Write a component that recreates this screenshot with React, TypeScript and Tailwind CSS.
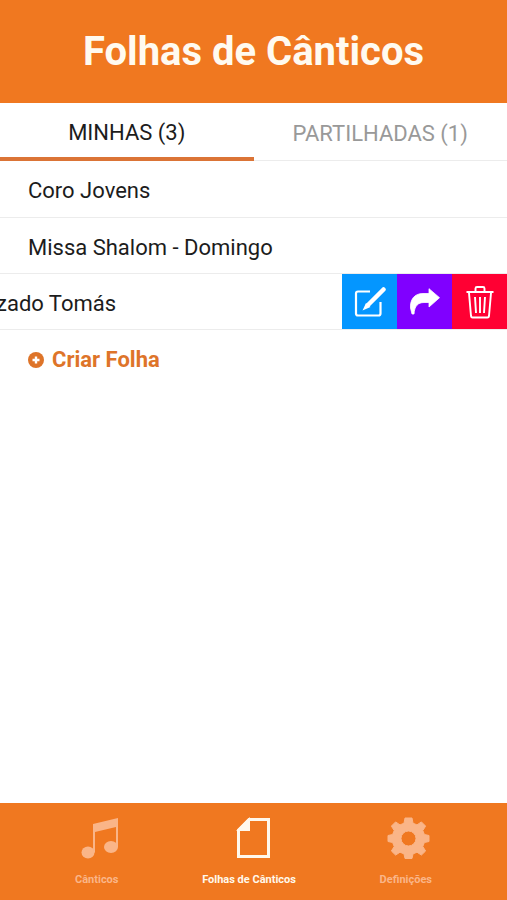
import type { ReactNode } from "react";

const PencilIcon = () => (
  <svg viewBox="1 0 32 32" className="w-8 h-8" fill="none" stroke="currentColor" strokeWidth="2.200" aria-hidden="true">
    <path d="M17 5.500H5Q3 5.500 3 7.500V27.500Q3 29.500 5 29.500H25.500Q27.500 29.500 27.500 27.500V16" />
    <path d="M30.500 3.500L15 19" strokeWidth="4.500" strokeLinecap="round" />
    <path d="M13 17L17.500 21L9.500 24.500Z" fill="currentColor" stroke="none" />
  </svg>
);

const ShareIcon = () => (
  <svg viewBox="0 0 32 32" className="w-8 h-8" fill="currentColor" aria-hidden="true">
    <path
      d="M30.500 11.700L20 2.700V7.500H14C5 7.500 1 14 1.500 22L3 28H5C5.500 20 9 16.500 15 16.500H20V21Z"
      stroke="currentColor"
      strokeWidth="0.800"
      strokeLinejoin="round"
    />
  </svg>
);

const TrashIcon = () => (
  <svg viewBox="0 0 32 36" className="w-8 h-9" fill="none" stroke="currentColor" strokeWidth="1.900" aria-hidden="true">
    <path d="M2.500 8H29.500M11.500 8V4.500Q11.500 3 13 3H19Q20.500 3 20.500 4.500V8" />
    <path d="M5 9L7 32Q7.200 33.500 8.500 33.500H23.500Q24.800 33.500 25 32L27 9" />
    <path d="M11 13L12 29M16 13V29M21 13L20 29" />
  </svg>
);

const NoteIcon = () => (
  <svg viewBox="-2 0 40 44" className="w-10 h-11 overflow-visible" fill="currentColor" aria-hidden="true">
    <path d="M14 8L39 2V31H37V11L16 16V36.500H14Z" />
    <ellipse cx="9" cy="36.500" rx="6.500" ry="6" />
    <ellipse cx="32" cy="31" rx="7" ry="6" />
  </svg>
);

const SheetIcon = () => (
  <svg viewBox="-5 0 40 44" className="w-10 h-11 overflow-visible" fill="none" stroke="currentColor" strokeWidth="3" aria-hidden="true">
    <path d="M15 3.500H34.500V40.500H4.500V14Z" />
    <path d="M15 3.500V14H4.500Z" fill="currentColor" strokeWidth="2" />
  </svg>
);

const GearIcon = () => (
  <svg viewBox="-2 0 44 44" className="w-11 h-11 overflow-visible" fill="currentColor" aria-hidden="true">
    <path
      fillRule="evenodd"
      d="M19 2H26L27 7.200L31 8.900L35.400 5.900L39.600 10.100L36.800 14.600L38.400 18.500L43 19.500V25.500L38.400 26.500L36.800 30.500L39.600 35L35.400 39.100L31 36.200L27 37.900L26 42.500H19L18 37.900L14 36.200L9.600 39.100L5.400 35L8.200 30.500L6.600 26.500L2 25.500V19.500L6.600 18.500L8.200 14.600L5.400 10.100L9.600 5.900L14 8.900L18 7.200ZM22.500 15A7.500 7.500 0 1 0 22.500 30A7.500 7.500 0 1 0 22.500 15Z"
      stroke="currentColor"
      strokeWidth="1"
      strokeLinejoin="round"
    />
  </svg>
);

const PlusIcon = () => (
  <svg viewBox="0 0 16 16" className="w-4 h-4" aria-hidden="true">
    <circle cx="8" cy="8" r="8" fill="currentColor" />
    <path d="M8 4.500V11.500M4.500 8H11.500" stroke="white" strokeWidth="2.400" />
  </svg>
);

const TabLink = ({ icon, label, active = false }: { icon: ReactNode; label: string; active?: boolean }) => (
  <a
    href="#"
    aria-current={active ? "page" : undefined}
    className={`flex flex-col items-center gap-3 text-[11px] leading-4 font-bold ${active ? "text-[#fff8ec]" : "text-[#fab588]"}`}
  >
    {icon}
    {label}
  </a>
);

const App = () => {
  return (
    <div className="min-h-screen flex flex-col bg-white text-[#1c1c1c] font-['Roboto',sans-serif] overflow-hidden">
      <header className="bg-[#f07820] pt-7 pb-[27px]">
        <h1 className="text-center text-[#fffaf0] text-[40px] leading-12 font-bold">Folhas de Cânticos</h1>
      </header>

      <div role="tablist" className="grid grid-cols-2 text-[22px] leading-7">
        <button role="tab" aria-selected="true" className="pt-4 pb-2.5 border-b-4 border-[#db7436]">
          MINHAS (3)
        </button>
        <button role="tab" aria-selected="false" className="pt-4 pb-3 border-b border-[#ececec] text-[#999]">
          PARTILHADAS (1)
        </button>
      </div>

      <main className="flex-1 text-[22px] leading-7">
        <ul>
          <li className="h-14 pt-1 px-7 flex items-center">Coro Jovens</li>
          <li className="h-14 pt-1 px-7 flex items-center border-t border-[#ececec]">Missa Shalom - Domingo</li>

          {/* Row swiped open, showing its actions */}
          <li className="h-14 flex items-stretch justify-between border-t border-[#ececec]">
            <span className="-ml-1 pt-1 flex items-center">zado Tomás</span>
            <div className="flex text-white">
              <button aria-label="Editar" className="w-[55px] flex items-center justify-center bg-[#0496ff]">
                <PencilIcon />
              </button>
              <button aria-label="Partilhar" className="w-[55px] flex items-center justify-center bg-[#8000ff]">
                <ShareIcon />
              </button>
              <button aria-label="Apagar" className="w-[55px] flex items-center justify-center bg-[#ff0033]">
                <TrashIcon />
              </button>
            </div>
          </li>
        </ul>
        <button className="w-full h-14 pt-1 px-7 flex items-center gap-2 border-t border-[#ececec] text-[#de7429] font-bold">
          <PlusIcon />
          Criar Folha
        </button>
      </main>

      <nav className="flex justify-between bg-[#f07820] px-[75px] pt-[13px] pb-3">
        <TabLink icon={<NoteIcon />} label="Cânticos" />
        <TabLink icon={<SheetIcon />} label="Folhas de Cânticos" active />
        <TabLink icon={<GearIcon />} label="Definições" />
      </nav>
    </div>
  );
};

export default App;
